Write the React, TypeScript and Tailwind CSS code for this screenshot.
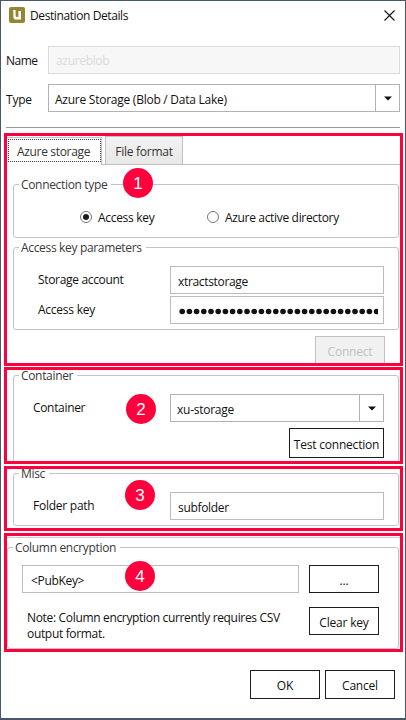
import type { ReactNode } from "react";

function Group({ title, className = "", children }: { title: string; className?: string; children: ReactNode }) {
  return (
    <fieldset className={`min-w-0 rounded-[3px] border border-[#c3c3c3] ${className}`}>
      <legend className="ml-[5px] h-[9px] whitespace-nowrap pr-1 pl-[2px] leading-[10px] text-[#3a3a3a]">{title}</legend>
      {children}
    </fieldset>
  );
}

function Field({ className = "", disabled = false, children }: { className?: string; disabled?: boolean; children: ReactNode }) {
  const tone = disabled ? "border-[#dcdcdc] bg-[#f7f7f7] text-[#dadada]" : "border-[#bcbcbc] bg-white";
  return (
    <div className={`flex h-[28px] shrink-0 items-center overflow-hidden border whitespace-nowrap ${tone} ${className}`}>
      {children}
    </div>
  );
}

function Combo({ className = "", children }: { className?: string; children: ReactNode }) {
  return (
    <div className={`flex h-[28px] shrink-0 border border-[#b2b2b2] bg-white tracking-[-0.25px] ${className}`}>
      <div className="flex flex-1 items-center whitespace-nowrap pt-[3px] pl-[6px]">{children}</div>
      <div className="flex w-[24px] items-center justify-center border-l border-[#b2b2b2]">
        <svg width="8" height="5" viewBox="0 0 8 5"><path d="M0 .5h8L4 4.5z" fill="#111" /></svg>
      </div>
    </div>
  );
}

function Button({ className = "h-[28px] w-[70px]", disabled = false, children }: { className?: string; disabled?: boolean; children: ReactNode }) {
  const tone = disabled ? "border-[#c2c2c2] bg-[#f1f1f1] text-[#c1c1c1]" : "border-[#1c1c1c] bg-white";
  return (
    <button className={`flex shrink-0 items-center justify-center border pt-[3px] tracking-[-0.2px] whitespace-nowrap ${tone} ${className}`}>
      {children}
    </button>
  );
}

function Badge({ n, className }: { n: number; className: string }) {
  return (
    <span className={`absolute flex size-[30px] items-center justify-center rounded-full bg-[#ff003c] font-['Liberation_Sans',sans-serif] text-[17px] leading-none tracking-normal text-white ${className}`}>
      {n}
    </span>
  );
}

function Radio({ checked = false }: { checked?: boolean }) {
  return (
    <span className="flex size-[12px] shrink-0 items-center justify-center rounded-full border border-[#777]">
      {checked && <span className="size-[6px] rounded-full bg-[#1b1b1b]" />}
    </span>
  );
}

export default function App() {
  return (
    <div className="flex h-[720px] w-[406px] flex-col border border-b-2 border-[#46586a] bg-white font-['Open_Sans',sans-serif] text-[12px] leading-[16px] tracking-[-0.33px] text-[#111]">
      <header className="flex h-[45px] items-start pt-[6px] pr-[10px] pl-[8px]">
        <svg width="16" height="16" viewBox="0 0 16 16">
          <rect width="16" height="16" rx="2" fill="#968632" />
          <path d="M4 3h2.6v5.6q0 1.4 1.4 1.4h1.4V4H12v8.6H7.6Q4.4 12.6 4.4 9.4V5z" fill="#fff" />
        </svg>
        <h1 className="ml-[5px] flex-1 pt-px tracking-[-0.4px]">Destination Details</h1>
        <svg className="mt-[3px]" width="11" height="11" viewBox="0 0 11 11">
          <path d="M.5.5l10 10M10.5.5l-10 10" stroke="#111" strokeWidth="1.1" />
        </svg>
      </header>

      <div className="flex items-center pl-[5px]">
        <span className="w-[42px] pt-[2px] tracking-[-0.5px]">Name</span>
        <Field disabled className="w-[352px] pt-[2px] pl-[7px]">azureblob</Field>
      </div>
      <div className="mt-[10px] flex items-center pl-[5px]">
        <span className="w-[42px] pt-[3px] tracking-[-0.2px]">Type</span>
        <Combo className="w-[352px]">Azure Storage (Blob / Data Lake)</Combo>
      </div>
      <hr className="mt-[15px] mr-[5px] ml-[5px] border-t border-[#999]" />

      <section className="relative mt-[5px] ml-[3px] h-[233px] w-[399px] shrink-0 overflow-hidden border-[3px] border-[#ff003c]">
        <div className="flex h-[29px] items-end border-b border-[#c0c0c0]">
          <div className="-mb-px h-[28px] w-[95px] border-t border-r border-[#c0c0c0] bg-white">
            <div className="mt-px ml-px flex h-[23px] items-center border border-dotted border-[#444] pt-[3px] pl-[8px] text-[#333]">Azure storage</div>
          </div>
          <div className="ml-[3px] flex h-[28px] w-[78px] items-center justify-center border border-b-0 border-[#c0c0c0] bg-linear-to-b from-[#f2f2f2] to-[#e8e8e8] pt-[3px] tracking-[-0.25px] text-[#333]">File format</div>
        </div>
        <Group title="Connection type" className="mt-[15px] ml-[6px] h-[58px] w-[386px]">
          <div className="flex items-center pt-[19px] pl-[66px]">
            <Radio checked />
            <span className="ml-[6px] w-[109px] pt-[2px] tracking-[-0.3px]">Access key</span>
            <Radio />
            <span className="ml-[6px] pt-[2px] tracking-[-0.33px]">Azure active directory</span>
          </div>
        </Group>
        <Group title="Access key parameters" className="mt-[5px] ml-[6px] h-[87px] w-[386px]">
          <div className="mt-[14px] flex pl-[24px]">
            <span className="w-[132px] pt-[6px]">Storage account</span>
            <Field className="w-[214px] pt-[3px] pl-[7px]">xtractstorage</Field>
          </div>
          <div className="mt-[2px] flex pl-[24px]">
            <span className="w-[132px] pt-[6px] tracking-[-0.25px]">Access key</span>
            <Field className="w-[214px] pl-[8px]">
              <svg className="mt-[3px]" width="199" height="7" viewBox="0 0 199 7">
                {Array.from({ length: 28 }, (_, i) => (
                  <circle key={i} cx={3.2 + i * 7.2} cy="3.5" r="2.8" fill="#111" />
                ))}
              </svg>
            </Field>
          </div>
        </Group>
        <Button disabled className="mt-[6px] ml-[308px] h-[28px] w-[70px]">Connect</Button>
        <Badge n={1} className="top-[32px] left-[116px]" />
      </section>

      <section className="relative mt-px ml-[3px] h-[97px] w-[399px] shrink-0 overflow-hidden border-[3px] border-[#ff003c]">
        <Group title="Container" className="mt-px ml-[6px] h-[100px] w-[386px]">
          <div className="mt-[14px] flex pl-[19px]">
            <span className="w-[137px] pt-[6px]">Container</span>
            <Combo className="w-[214px]">xu-storage</Combo>
          </div>
          <Button className="mt-[6px] ml-[275px] h-[30px] w-[95px]">Test connection</Button>
        </Group>
        <Badge n={2} className="top-[24px] left-[119px]" />
      </section>

      <section className="relative mt-[2px] ml-[3px] h-[65px] w-[399px] shrink-0 overflow-hidden border-[3px] border-[#ff003c]">
        <Group title="Misc" className="ml-[6px] h-[57px] w-[386px]">
          <div className="mt-[14px] flex pl-[19px]">
            <span className="w-[137px] pt-[6px] tracking-[-0.25px]">Folder path</span>
            <Field className="w-[214px] pt-[3px] pl-[7px]">subfolder</Field>
          </div>
        </Group>
        <Badge n={3} className="top-[11px] left-[118px]" />
      </section>

      <section className="relative mt-[2px] ml-[3px] h-[119px] w-[399px] shrink-0 overflow-hidden border-[3px] border-[#ff003c]">
        <div className="mt-px h-px bg-[#ccc]" />
        <Group title="Column encryption" className="mt-[5px] h-[106px] w-[392px]">
          <div className="mt-[13px] flex gap-[10px] pl-[14px]">
            <Field className="w-[277px] pt-[3px] pl-[8px]">&lt;PubKey&gt;</Field>
            <Button>...</Button>
          </div>
          <div className="mt-[14px] flex pl-[19px]">
            <p className="w-[282px] pt-[3px] whitespace-nowrap">Note: Column encryption currently requires CSV<br />output format.</p>
            <Button>Clear key</Button>
          </div>
        </Group>
        <Badge n={4} className="top-[25px] left-[118px]" />
      </section>

      <footer className="mt-[18px] flex gap-[5px] pl-[249px]">
        <Button className="h-[29px] w-[70px]">OK</Button>
        <Button className="h-[29px] w-[70px]">Cancel</Button>
      </footer>
    </div>
  );
}
